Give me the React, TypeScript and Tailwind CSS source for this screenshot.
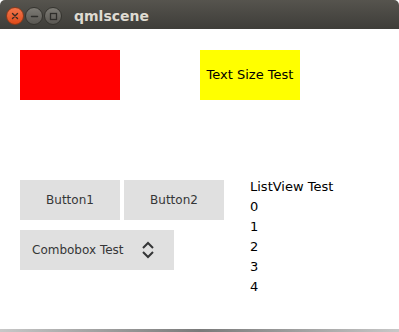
import React from 'react';

const items = ['0', '1', '2', '3', '4'];

function TitleBar() {
  return (
    <div className="h-[29px] shrink-0 bg-white">
      <div className="h-full rounded-t-[5px] bg-gradient-to-b from-[#56544e] to-[#3e3d39] flex items-center pl-[6px] pt-[3px]">
        {/* window controls */}
        <div className="flex items-center gap-[1px]">
          <div className="w-[18px] h-[18px] rounded-full bg-gradient-to-b from-[#f3764b] to-[#df4a16] border border-[#8a3a1c] flex items-center justify-center">
            <svg width="8" height="8" viewBox="0 0 8 8">
              <path d="M1.5 1.5 L6.5 6.5 M6.5 1.5 L1.5 6.5" stroke="#3a2a22" strokeWidth="1.4" strokeLinecap="round" />
            </svg>
          </div>
          <div className="w-[18px] h-[18px] rounded-full bg-gradient-to-b from-[#7d7b75] to-[#5a5853] border border-[#35342f] flex items-center justify-center">
            <svg width="9" height="9" viewBox="0 0 9 9">
              <path d="M1.5 4.5 L7.5 4.5" stroke="#2e2d2a" strokeWidth="1.5" strokeLinecap="round" />
            </svg>
          </div>
          <div className="w-[18px] h-[18px] rounded-full bg-gradient-to-b from-[#7d7b75] to-[#5a5853] border border-[#35342f] flex items-center justify-center">
            <svg width="9" height="9" viewBox="0 0 9 9">
              <rect x="1.5" y="1.5" width="6" height="6" fill="none" stroke="#2e2d2a" strokeWidth="1.3" />
            </svg>
          </div>
        </div>
        <span className="ml-[12px] text-[14px] font-bold text-[#dfdbd2] font-['DejaVu_Sans',sans-serif] leading-none">
          qmlscene
        </span>
      </div>
    </div>
  );
}

export default function App() {
  return (
    <div className="w-[399px] h-[332px] flex flex-col bg-white overflow-hidden font-['DejaVu_Sans',sans-serif]">
      <TitleBar />

      <div className="flex-1 flex flex-col">
        {/* Rectangles */}
        <div className="flex pl-[20px] pt-[21px]">
          <div className="w-[100px] h-[50px] bg-[#ff0000]" />
          <div className="ml-[80px] w-[100px] h-[50px] bg-[#ffff00] flex items-center justify-center text-[13px] text-black">
            Text Size Test
          </div>
        </div>

        {/* Controls + list */}
        <div className="flex pl-[20px] pt-[80px]">
          <div className="flex flex-col gap-[10px]">
            <div className="flex gap-[4px]">
              <button className="w-[100px] h-[40px] bg-[#e0e0e0] text-[12px] text-[#353637]">Button1</button>
              <button className="w-[100px] h-[40px] bg-[#e0e0e0] text-[12px] text-[#353637]">Button2</button>
            </div>
            <div className="w-[154px] h-[40px] bg-[#e0e0e0] flex items-center pl-[12px] pr-[19px] text-[12px] text-[#353637]">
              <span className="flex-1">Combobox Test</span>
              <svg width="14" height="18" viewBox="0 0 14 18">
                <path d="M2 7 L7 2 L12 7 M2 11 L7 16 L12 11" fill="none" stroke="#353637" strokeWidth="2" />
              </svg>
            </div>
          </div>
          <div className="ml-[26px] flex flex-col text-[13px] text-black leading-[20px] -mt-[3px]">
            <span>ListView Test</span>
            {items.map((i) => (
              <span key={i}>{i}</span>
            ))}
          </div>
        </div>
      </div>

      {/* bottom edge */}
      <div className="h-[3px] shrink-0 bg-gradient-to-r from-[#c8c8c8] via-[#7a7a7a] to-[#c8c8c8]" />
    </div>
  );
}
